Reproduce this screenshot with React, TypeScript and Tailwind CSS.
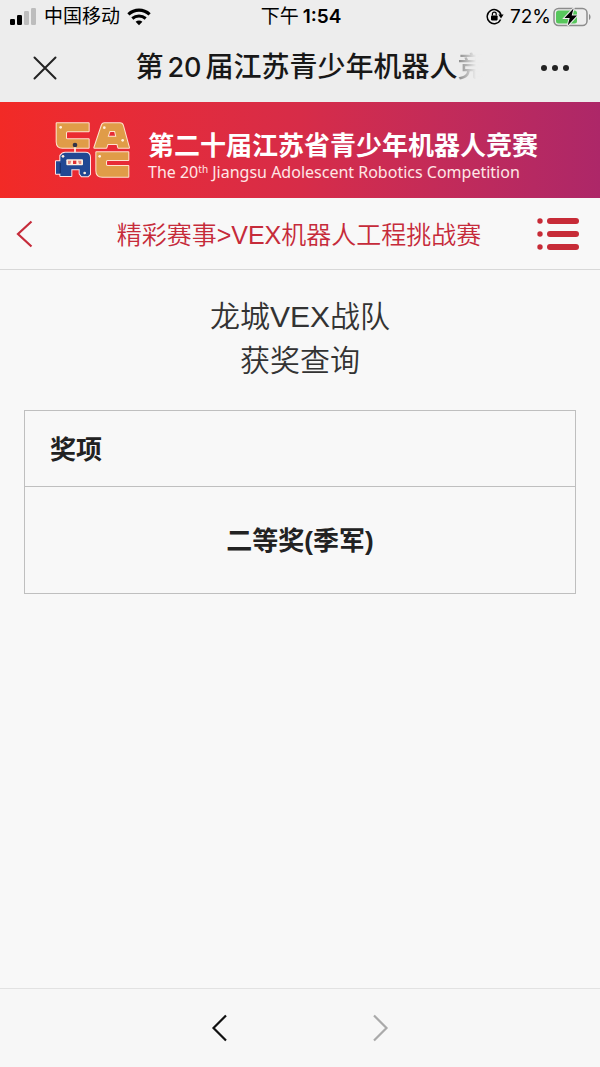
import type { ReactNode } from "react";

interface Award {
  id: number;
  name: string;
}

const awards: Award[] = [{ id: 1, name: "二等奖(季军)" }];

function SignalIcon() {
  return (
    <svg width="27" height="17" viewBox="0 0 27 17" aria-hidden="true">
      <rect x="0" y="11" width="5" height="6" rx="1.2" fill="#000" />
      <rect x="7" y="7" width="5" height="10" rx="1.2" fill="#000" />
      <rect x="14" y="3" width="5" height="14" rx="1.2" fill="#bdbdbd" />
      <rect x="21" y="0" width="5" height="17" rx="1.2" fill="#bdbdbd" />
    </svg>
  );
}

function WifiIcon() {
  return (
    <svg width="24" height="18" viewBox="0 0 24 18" fill="none" stroke="#000" aria-hidden="true">
      <path d="M1.4 6.4C7.5.8 16.5.8 22.6 6.4" strokeWidth="3.2" />
      <path d="M5.3 10.5c3.9-3.4 9.5-3.4 13.4 0" strokeWidth="3" />
      <path d="M8.6 13.7c2-1.7 4.8-1.7 6.8 0L12 17.3z" fill="#000" stroke="none" />
    </svg>
  );
}

function RotationLockIcon() {
  return (
    <svg width="18" height="17" viewBox="0 0 18 17" fill="none" stroke="#000" aria-hidden="true">
      <path d="M14.6 11.5A7 7 0 1 1 15 7" strokeWidth="1.5" />
      <path d="M12.4 6.6h5.2L15 10.4z" fill="#000" stroke="none" />
      <rect x="5" y="7.4" width="6.6" height="5" rx=".8" fill="#000" stroke="none" />
      <path d="M6.4 7.6V6a1.9 1.9 0 0 1 3.8 0v1.6" strokeWidth="1.2" />
    </svg>
  );
}

function BatteryIcon() {
  return (
    <svg width="39" height="20" viewBox="0 0 39 20" aria-hidden="true">
      <rect x="1" y="1.5" width="33" height="17" rx="4.5" fill="none" stroke="#8c8c8c" strokeWidth="1.5" />
      <path d="M36 7v6c2-.8 2-5.2 0-6z" fill="#8c8c8c" />
      <rect x="3" y="3.5" width="21" height="13" rx="2.5" fill="#57c75c" />
      <path
        d="M20.5 1.5L11.5 11h5.2l-2 7.5L24 8.6h-5.3z"
        fill="#000"
        stroke="#ececec"
        strokeWidth="2"
        paintOrder="stroke"
      />
    </svg>
  );
}

// CARC emblem: three orange letters and a blue robot in place of the R
function CarcLogo() {
  return (
    <svg width="76" height="58" viewBox="48 64 228 174" role="img" aria-label="CARC" className="shrink-0">
      <g fill="#e09c48" stroke="#ffe3cf" strokeWidth="6" strokeLinejoin="round" paintOrder="stroke">
        <path d="M53 71H149V95H86Q81 95 81 100V114Q81 119 86 119H149V144H70Q53 144 53 126Z" />
        <path
          fillRule="evenodd"
          d="M196 71H243Q250 71 252 78L270 144H238L235 133H206L202 144H166L188 78Q190 71 196 71ZM212 94L206 111H232L228 94Z"
        />
        <path d="M172 158H268V181H206Q201 181 201 186V194Q201 199 206 199H268V231H190Q172 231 172 213Z" />
      </g>
      <g fill="#fff0e0">
        <circle cx="65" cy="83" r="4" />
        <circle cx="196" cy="84" r="4" />
        <circle cx="251" cy="122" r="4" />
        <circle cx="182" cy="170" r="4" />
      </g>
      <path
        fill="#214893"
        stroke="#ffe3e3"
        strokeWidth="6"
        strokeLinejoin="round"
        paintOrder="stroke"
        d="M78 159H139Q153 159 153 173V224L147 230H128L122 222V209H97V229H64V222H51V185H64V168Q70 159 78 159Z"
      />
      <path d="M108 137V158" stroke="#fff0e0" strokeWidth="5" />
      <circle cx="108" cy="136" r="7" fill="#323348" />
      <path d="M64 190V220" stroke="#163170" strokeWidth="4" />
      <rect x="82" y="179" width="50" height="18" rx="3" fill="#fff0e0" />
      <path d="M87 183h10l-3 10h-7zM127 183h-10l3 10h7z" fill="#e58a80" />
      <path d="M102 183h10v10h-10z" fill="#df3034" />
      <circle cx="72" cy="170" r="4" fill="#fff0e0" />
      <circle cx="137" cy="220" r="4" fill="#fff0e0" />
    </svg>
  );
}

function IconButton({ label, disabled, children }: { label: string; disabled?: boolean; children: ReactNode }) {
  return (
    <button type="button" aria-label={label} disabled={disabled} className="flex shrink-0 items-center justify-center">
      {children}
    </button>
  );
}

function StatusBar() {
  return (
    <div className="grid h-[33px] grid-cols-3 items-center pr-2 pl-[10px] text-[19px] leading-8 text-black">
      <div className="flex items-center gap-[7px] whitespace-nowrap">
        <SignalIcon />
        <span>中国移动</span>
        <WifiIcon />
      </div>
      <div className="text-center whitespace-nowrap">
        下午<span className="ml-1 font-['Inter'] font-semibold">1:54</span>
      </div>
      <div className="flex items-center justify-end gap-0.5">
        <RotationLockIcon />
        <span className="ml-1 font-['Inter']">72%</span>
        <BatteryIcon />
      </div>
    </div>
  );
}

function TitleBar() {
  return (
    <div className="flex h-[69px] items-center justify-between pr-[30px] pl-[33px]">
      <IconButton label="关闭">
        <svg width="24" height="24" viewBox="0 0 24 24" stroke="#222" strokeWidth="2" strokeLinecap="round">
          <path d="M1.5 1.5l21 21M22.5 1.5l-21 21" />
        </svg>
      </IconButton>
      {/* the last character fades out towards the menu button */}
      <h1 className="ml-6 text-[28px] leading-10 font-medium whitespace-nowrap text-[#181818]">
        第<span className="mx-1 font-['Inter'] text-[27px]">20</span>届江苏青少年机器人
        <span className="bg-linear-to-r from-[#888] to-[#ededed] to-65% bg-clip-text text-transparent">竞</span>
      </h1>
      <IconButton label="更多">
        <svg width="30" height="8" viewBox="0 0 30 8" fill="#222">
          <circle cx="4" cy="4" r="3" />
          <circle cx="15" cy="4" r="3" />
          <circle cx="26" cy="4" r="3" />
        </svg>
      </IconButton>
    </div>
  );
}

function Banner() {
  return (
    <div className="flex h-24 items-center gap-[17px] bg-linear-to-r from-[#f22a26] via-[#d72c48] to-[#ad2768] pl-[55px] text-white">
      <CarcLogo />
      <div className="pt-3 whitespace-nowrap">
        <p className="text-[26px] leading-8 font-bold">第二十届江苏省青少年机器人竞赛</p>
        <p className="font-['Noto_Sans'] text-[16px] leading-5 text-[#ffe6e6]">
          The 20<sup className="text-[10px]">th</sup> Jiangsu Adolescent Robotics Competition
        </p>
      </div>
    </div>
  );
}

function PageHeader() {
  return (
    <div className="flex h-[72px] items-center justify-between border-b border-[#d8d8d8] pr-[21px] pl-4 text-[#c62b3a]">
      <IconButton label="返回">
        <svg width="17" height="28" viewBox="0 0 17 28" fill="none" stroke="currentColor" strokeWidth="2.2">
          <path d="M15.5 1.5L2 14l13.5 12.5" />
        </svg>
      </IconButton>
      <h2 className="ml-7 pt-0.5 text-[25px] leading-9 font-[350] whitespace-nowrap">精彩赛事&gt;VEX机器人工程挑战赛</h2>
      <IconButton label="菜单">
        <svg width="42" height="32" viewBox="0 0 42 32" fill="#c72b37">
          <circle cx="3" cy="3" r="2.7" />
          <circle cx="3" cy="16" r="2.7" />
          <circle cx="3" cy="29" r="2.7" />
          <rect x="10" y="0" width="32" height="6" rx="3" />
          <rect x="10" y="13" width="32" height="6" rx="3" />
          <rect x="10" y="26" width="32" height="6" rx="3" />
        </svg>
      </IconButton>
    </div>
  );
}

export default function App() {
  return (
    <div className="flex min-h-screen flex-col bg-[#f8f8f8] font-['Liberation_Sans','Noto_Sans_CJK_SC',sans-serif] text-[#222]">
      <header>
        <div className="bg-[#ededed]">
          <StatusBar />
          <TitleBar />
        </div>
        <Banner />
        <PageHeader />
      </header>

      <main className="flex-1 px-6 pt-[25px]">
        <div className="text-center text-[30px] leading-[44px] font-[350] text-[#333]">
          <p>龙城VEX战队</p>
          <p>获奖查询</p>
        </div>

        <table className="mt-[27px] w-full border-collapse border border-[#bfbfbf] text-[26px] leading-9">
          <thead>
            <tr>
              <th className="h-[76px] border border-[#bfbfbf] px-[25px] pt-0.5 text-left font-bold">奖项</th>
            </tr>
          </thead>
          <tbody>
            {awards.map((award) => (
              <tr key={award.id}>
                <td className="h-[107px] border border-[#bfbfbf] pt-0.5 text-center font-bold">{award.name}</td>
              </tr>
            ))}
          </tbody>
        </table>
      </main>

      <footer className="flex h-[79px] items-center justify-center gap-36 border-t border-[#e2e2e2] bg-[#f7f7f7]">
        <IconButton label="后退">
          <svg width="17" height="28" viewBox="0 0 17 28" fill="none" stroke="#111" strokeWidth="2.2">
            <path d="M15 1.5L2.5 14L15 26.5" />
          </svg>
        </IconButton>
        <IconButton label="前进" disabled>
          <svg width="17" height="28" viewBox="0 0 17 28" fill="none" stroke="#aaa" strokeWidth="2.2">
            <path d="M2 1.5L14.5 14L2 26.5" />
          </svg>
        </IconButton>
      </footer>
    </div>
  );
}
